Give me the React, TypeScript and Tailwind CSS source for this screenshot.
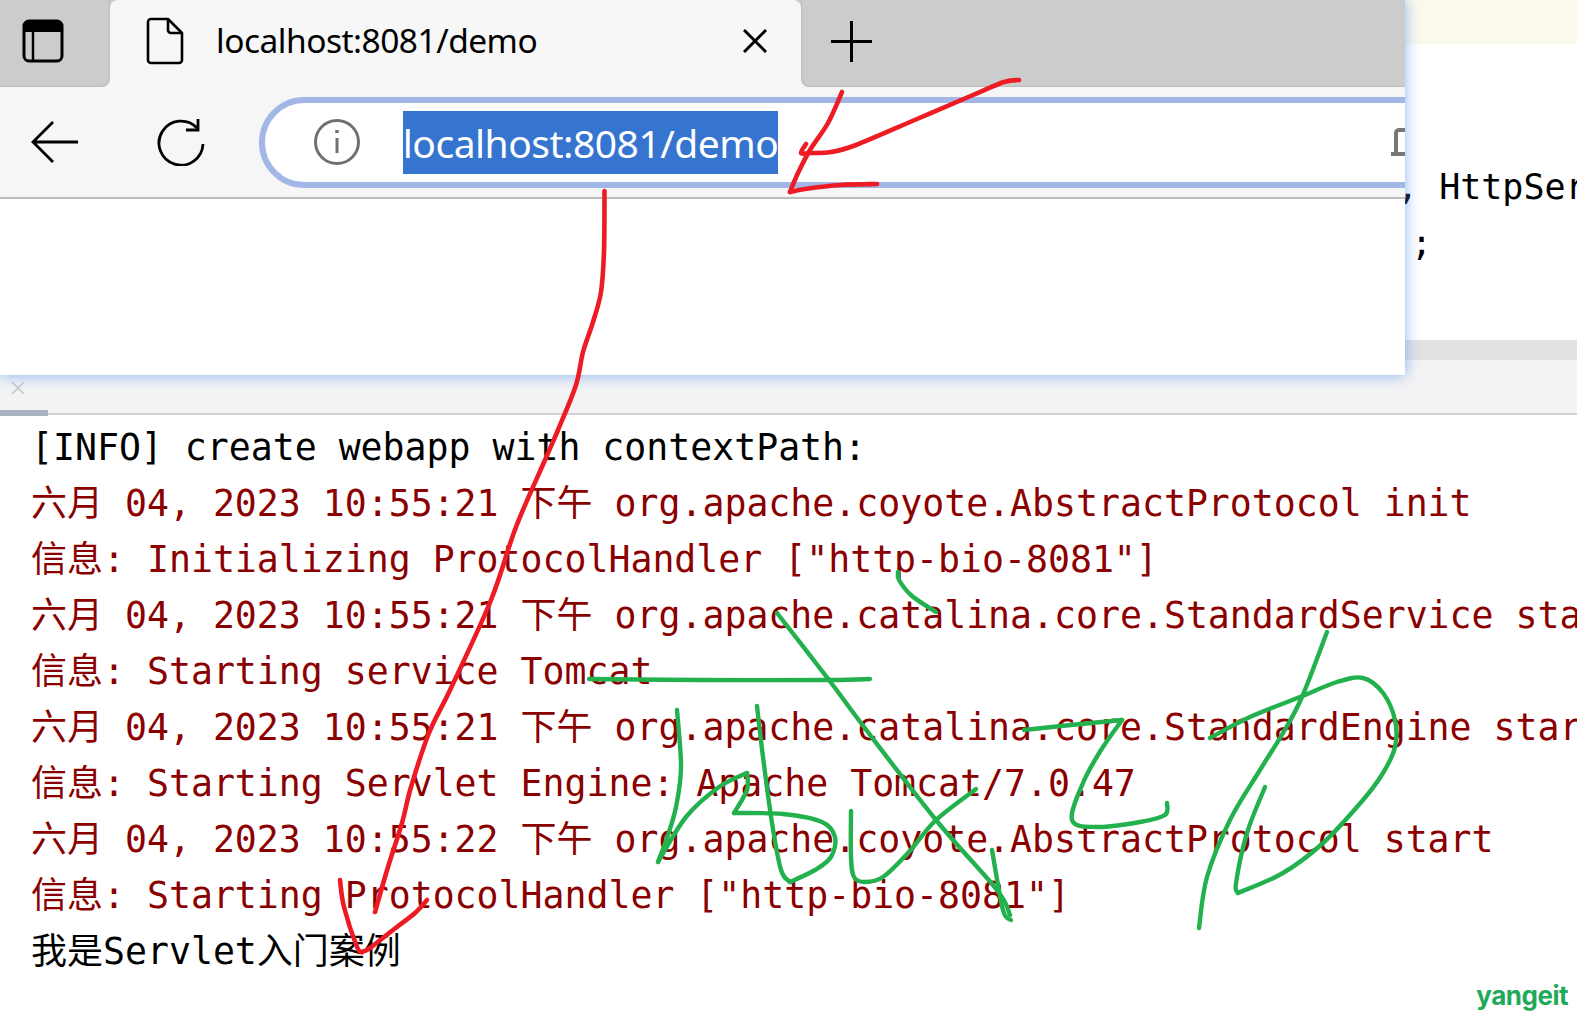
const red = [
  [[604.5, 191], [604, 251], [601, 292], [593, 322], [583, 352], [576, 385], [558, 430], [545, 460], [516, 527], [491, 600], [451, 688], [429, 733], [411, 787], [402, 823], [388, 867], [375, 912]],
  [[340, 880], [344, 907], [357, 947], [362, 952]],
  [[362, 952], [370, 948], [393, 930], [415, 913], [427, 900]],
  [[1019, 80], [1004, 82], [973, 95], [917, 119], [856, 145], [831, 152], [810, 153], [801, 153], [806, 144]],
  [[842, 92], [828, 123], [810, 150], [798, 173], [790, 192]],
  [[790, 192], [805, 189], [841, 185], [877, 184]],
];

const green = [
  [[898, 572], [899, 580], [912, 596], [936, 612]],
  [[589, 679], [700, 680], [829, 680], [870, 679]],
  [[777, 613], [829, 680], [861, 723], [936, 820], [997, 890], [1010, 915]],
  [[992, 850], [1003, 910], [1011, 920]],
  [[677, 710], [681, 767], [676, 807], [667, 838], [658, 862]],
  [[658, 862], [686, 817], [719, 787], [747, 773]],
  [[747, 773], [747, 790], [734, 813]],
  [[734, 813], [783, 814], [822, 822], [835, 837], [831, 857], [815, 870], [790, 882]],
  [[790, 882], [781, 870], [772, 823], [763, 757], [757, 706]],
  [[851, 811], [851, 857], [854, 877], [865, 882], [883, 877], [908, 853], [936, 820], [976, 789]],
  [[1024, 730], [1061, 726], [1122, 720]],
  [[1122, 720], [1101, 750], [1083, 783], [1072, 820], [1097, 827], [1140, 822], [1165, 815], [1167, 803]],
  [[1327, 632], [1302, 697], [1283, 733], [1260, 770], [1230, 820], [1207, 877], [1199, 928]],
  [[1210, 738], [1250, 717], [1300, 697], [1337, 682], [1363, 678], [1383, 693], [1395, 720], [1395, 747], [1383, 773], [1363, 800], [1323, 843], [1283, 873], [1238, 893]],
  [[1238, 893], [1236, 883], [1247, 833], [1265, 787]],
];

// catmull-rom through the points of a hand drawn stroke
function strokePath(pts: number[][]) {
  let d = `M${pts[0][0]} ${pts[0][1]}`;
  for (let i = 0; i < pts.length - 1; i++) {
    const p0 = pts[i - 1] ?? pts[i];
    const p1 = pts[i];
    const p2 = pts[i + 1];
    const p3 = pts[i + 2] ?? p2;
    const c1x = p1[0] + (p2[0] - p0[0]) / 6;
    const c1y = p1[1] + (p2[1] - p0[1]) / 6;
    const c2x = p2[0] - (p3[0] - p1[0]) / 6;
    const c2y = p2[1] - (p3[1] - p1[1]) / 6;
    d += ` C${c1x} ${c1y} ${c2x} ${c2y} ${p2[0]} ${p2[1]}`;
  }
  return d;
}

const logLines = [
  { text: "[INFO] create webapp with contextPath:", color: "text-black" },
  { text: "六月 04, 2023 10:55:21 下午 org.apache.coyote.AbstractProtocol init", color: "text-[#8b0000]" },
  { text: "信息: Initializing ProtocolHandler [\"http-bio-8081\"]", color: "text-[#8b0000]" },
  { text: "六月 04, 2023 10:55:21 下午 org.apache.catalina.core.StandardService startInternal", color: "text-[#8b0000]" },
  { text: "信息: Starting service Tomcat", color: "text-[#8b0000]" },
  { text: "六月 04, 2023 10:55:21 下午 org.apache.catalina.core.StandardEngine startInternal", color: "text-[#8b0000]" },
  { text: "信息: Starting Servlet Engine: Apache Tomcat/7.0.47", color: "text-[#8b0000]" },
  { text: "六月 04, 2023 10:55:22 下午 org.apache.coyote.AbstractProtocol start", color: "text-[#8b0000]" },
  { text: "信息: Starting ProtocolHandler [\"http-bio-8081\"]", color: "text-[#8b0000]" },
  { text: "我是Servlet入门案例", color: "text-black" },
];

function BrowserWindow() {
  return (
    <div className="absolute left-0 top-0 w-[1405px] h-[375px] flex flex-col bg-white overflow-hidden shadow-[0_0_14px_rgba(70,140,240,0.65)]">
      <div className="flex h-[87px] shrink-0 bg-[linear-gradient(#cccccc_50%,#f7f7f7_50%)]">
        <div className="w-[110px] flex items-center pl-[22px] pb-[5px] bg-[#cccccc] rounded-br-lg shadow-[inset_-1px_-1px_2px_rgba(0,0,0,0.08)]">
          <svg width="42" height="44" viewBox="0 0 42 44" fill="none">
            <rect x="2" y="2" width="38" height="40" rx="5" stroke="#000" strokeWidth="3" />
            <path d="M2 7a5 5 0 0 1 5-5h28a5 5 0 0 1 5 5v6H2z" fill="#000" />
            <path d="M11 13v28" stroke="#000" strokeWidth="2.5" />
          </svg>
        </div>
        <div className="w-[691px] flex items-center pl-[36px] pb-[5px] bg-[#f7f7f7] rounded-t-lg">
          <svg width="38" height="48" viewBox="0 0 38 48" fill="none" stroke="#000" strokeWidth="2.6" strokeLinejoin="round">
            <path d="M5 2h17l14 14v27a3 3 0 0 1-3 3H5a3 3 0 0 1-3-3V5a3 3 0 0 1 3-3z" />
            <path d="M22 2v11a3 3 0 0 0 3 3h11" />
          </svg>
          <span className="ml-[32px] w-[495px] text-[33.5px] leading-none tracking-[-0.5px] text-black font-['Noto_Sans',sans-serif]">localhost:8081/demo</span>
          <svg width="24" height="24" viewBox="0 0 24 24" className="ml-[32px]" stroke="#000" strokeWidth="3">
            <path d="M1 1l22 22M23 1L1 23" />
          </svg>
        </div>
        <div className="flex-1 flex items-center pl-[30px] pb-[5px] bg-[#cccccc] rounded-bl-lg shadow-[inset_1px_-1px_2px_rgba(0,0,0,0.08)]">
          <svg width="41" height="41" viewBox="0 0 41 41" stroke="#000" strokeWidth="3">
            <path d="M20.5 0v41M0 20.5h41" />
          </svg>
        </div>
      </div>
      <div className="flex items-center h-[112px] shrink-0 bg-[#f6f6f6] border-b-2 border-[#bdbdbd] pl-[31px]">
        <svg width="48" height="42" viewBox="0 0 48 42" fill="none" stroke="#000" strokeWidth="2.8" className="shrink-0">
          <path d="M47 21H3M22 1L2 21l20 20" />
        </svg>
        <svg width="48" height="48" viewBox="0 0 48 48" fill="none" stroke="#000" strokeWidth="2.8" className="shrink-0 ml-[78px]">
          <path d="M40 10A22 22 0 1 0 46 26" />
          <path d="M41 1v11H29" />
        </svg>
        <div className="flex items-center w-[1300px] h-[91px] ml-[54px] pl-[49px] shrink-0 bg-white border-[6px] border-[#a3b7e6] rounded-full">
          <svg width="46" height="46" viewBox="0 0 46 46" fill="none" stroke="#707070" strokeWidth="3" className="shrink-0">
            <circle cx="23" cy="23" r="21.5" />
            <path d="M23 19v15" />
            <path d="M23 11v3" strokeWidth="3.5" />
          </svg>
          <span className="ml-[43px] w-[375px] h-[63px] shrink-0 flex items-center justify-center bg-[#3574cf] text-white text-[39px] leading-none tracking-[-0.5px] font-['Noto_Sans',sans-serif]">localhost:8081/demo</span>
          <svg width="20" height="28" viewBox="0 0 20 28" fill="none" stroke="#777777" strokeWidth="4" className="shrink-0 ml-[613px]">
            <path d="M5 27V5a3 3 0 0 1 3-3h12M0 26h20" />
          </svg>
        </div>
      </div>
    </div>
  );
}

export default function App() {
  return (
    <div className="relative w-[1577px] h-[1020px] overflow-hidden bg-white flex flex-col font-['DejaVu_Sans_Mono','Noto_Sans_CJK_SC',monospace]">
      <div className="h-[340px] shrink-0 flex flex-col">
        <div className="h-[44px] bg-[#fcfaec]" />
        <div className="pt-[115px] pl-[1397px] text-[35px] leading-[56px] text-black whitespace-pre">
          <div>, HttpServletResponse resp)</div>
          <div className="pl-[14px]">;</div>
        </div>
      </div>
      <div className="h-[20px] shrink-0 bg-[#e2e2e2]" />
      <div className="relative h-[55px] shrink-0 bg-[#f3f3f3] border-b-2 border-[#d2d2d2]">
        <svg width="14" height="14" viewBox="0 0 14 14" stroke="#c8c8c8" strokeWidth="1.6" className="absolute left-[11px] top-[21px]">
          <path d="M1 1l12 12M13 1L1 13" />
        </svg>
        <div className="absolute left-0 bottom-[-3px] w-[48px] h-[6px] bg-[#a9b3c4]" />
      </div>
      <div className="flex-1 pt-[5px] pl-[31px]">
        {logLines.map((line, i) => (
          <div key={i} className={`h-[56px] text-[36.5px] leading-[56px] whitespace-pre ${line.color}`}>
            {line.text.split(/([\u4e00-\u9fff]+)/).map((part, j) =>
              j % 2 === 1 ? (
                <span key={j} className="text-[36px]">{part}</span>
              ) : (
                part
              )
            )}
          </div>
        ))}
      </div>
      <BrowserWindow />
      <svg width="1577" height="1020" viewBox="0 0 1577 1020" fill="none" strokeLinecap="round" strokeLinejoin="round" className="absolute left-0 top-0 pointer-events-none">
        {red.map((pts, i) => (
          <path key={i} d={strokePath(pts)} stroke="#ed1c24" strokeWidth="4.6" />
        ))}
        {green.map((pts, i) => (
          <path key={i} d={strokePath(pts)} stroke="#22b14c" strokeWidth="4.4" />
        ))}
      </svg>
      <div className="absolute right-[9px] bottom-[11px] text-[26px] leading-none font-bold tracking-[-0.5px] text-[#1faa59] font-['Inter',sans-serif]">yangeit</div>
    </div>
  );
}
